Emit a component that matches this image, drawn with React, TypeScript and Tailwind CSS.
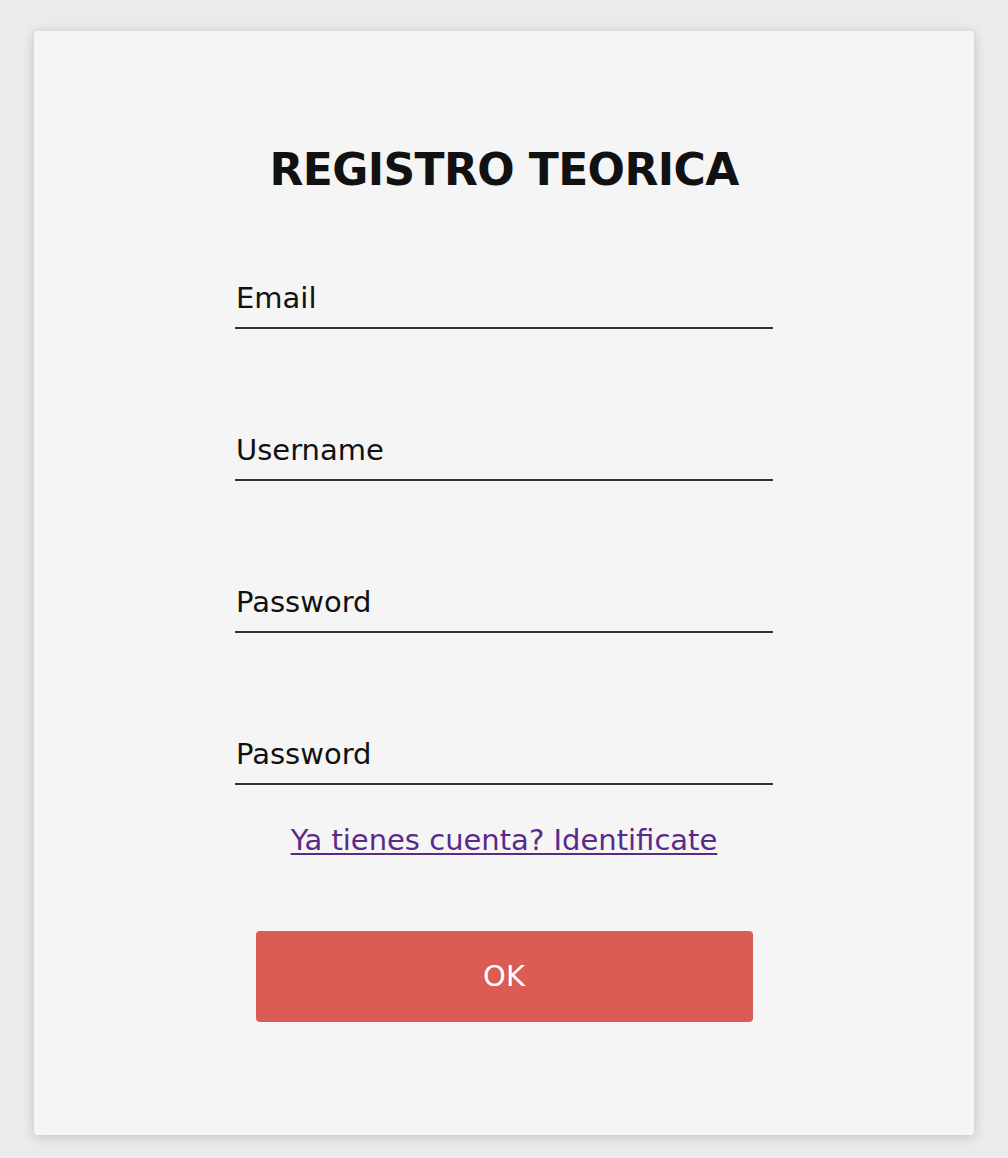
export default function App() {
  const fields = [
    { name: 'email', type: 'email', label: 'Email' },
    { name: 'username', type: 'text', label: 'Username' },
    { name: 'password', type: 'password', label: 'Password' },
    { name: 'password2', type: 'password', label: 'Password' },
  ];

  return (
    <div className="min-h-[1158px] bg-[#ebebeb] px-[34px] pt-[31px] pb-[23px] font-['DejaVu_Sans',sans-serif]">
      <div className="flex h-[1104px] flex-col items-center rounded-[4px] bg-[#f5f5f5] pt-[117px] shadow-[0_2px_12px_rgba(0,0,0,0.18)]">
        <h1 className="text-[44px] font-bold leading-none tracking-[-0.6px] text-[#111]">REGISTRO TEORICA</h1>
        <form className="mt-[75px] flex w-[538px] flex-col items-center" onSubmit={(e) => e.preventDefault()}>
          {fields.map((field, i) => (
            <input
              key={field.name}
              type={field.type}
              name={field.name}
              placeholder={field.label}
              className={`h-[62px] w-full border-b-2 border-[#333] bg-transparent px-[1px] pt-[2px] text-[29px] text-[#111] outline-none placeholder:text-[#111] ${i > 0 ? 'mt-[90px]' : ''}`}
            />
          ))}
          <a href="#" className="mt-[41px] text-[29px] leading-none text-[#5a2a8a] underline decoration-2 underline-offset-[3px]">
            Ya tienes cuenta? Identificate
          </a>
          <button type="submit" className="mt-[76px] h-[91px] w-[497px] rounded-[4px] bg-[#db5b55] text-[29px] text-white">
            OK
          </button>
        </form>
      </div>
    </div>
  );
}
